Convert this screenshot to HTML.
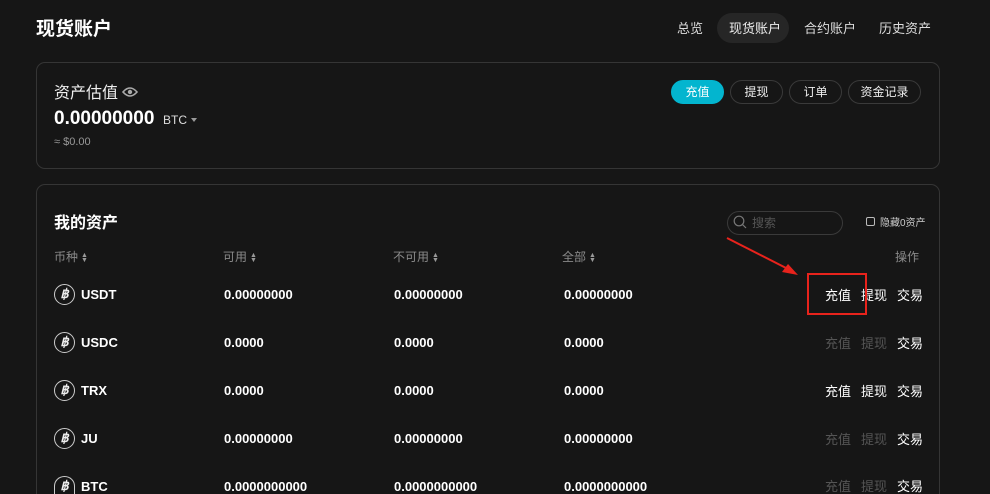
<!DOCTYPE html>
<html style="width:990px;height:494px;overflow:hidden"><head><meta charset="utf-8"><style>
*{margin:0;padding:0;box-sizing:border-box}
body{width:990px;height:494px;background:#161616;color:#fff;font-family:"Liberation Sans","Noto Sans CJK SC",sans-serif;position:relative;overflow:hidden}
#w{position:absolute;left:0;top:0;width:990px;height:494px;overflow:hidden}
.a{position:absolute;white-space:nowrap;line-height:1}
.card{position:absolute;border:1px solid #353535;border-radius:9px}
.btn{position:absolute;top:80px;height:24px;border:1px solid #3a3a3a;border-radius:12px;font-size:12px;line-height:22px;text-align:center;color:#eee}
.h{font-size:12px;color:#8a8a8a;top:251px}
.coin{position:absolute;left:54px;width:21px;height:21px;border:1.3px solid #ccc;border-radius:50%;font-size:13px;font-weight:bold;text-align:center;line-height:18px;font-style:italic;color:#eee}
.c{font-size:13px;font-weight:bold}
.op{font-size:13px}
.dim{color:#555}
.sort{display:inline-block;vertical-align:middle;margin-left:3px;font-size:7px;line-height:5px;color:#999}
</style></head><body><div id="w">
<div class="a" style="left:36px;top:20px;font-size:19px;font-weight:bold">现货账户</div>
<div class="a" style="left:677px;top:22px;font-size:13px;color:#ddd">总览</div>
<div class="a" style="left:717px;top:13px;width:72px;height:30px;border-radius:15px;background:#262626"></div>
<div class="a" style="left:729px;top:22px;font-size:13px;color:#eee">现货账户</div>
<div class="a" style="left:804px;top:22px;font-size:13px;color:#ddd">合约账户</div>
<div class="a" style="left:879px;top:22px;font-size:13px;color:#ddd">历史资产</div>

<div class="card" style="left:36px;top:62px;width:904px;height:107px"></div>
<div class="a" style="left:54px;top:86px;font-size:16px;color:#eee">资产估值</div>
<svg class="a" style="left:122px;top:86px" width="16" height="12" viewBox="0 0 16 12"><path d="M1 6Q8-2 15 6Q8 14 1 6Z" fill="none" stroke="#aaa" stroke-width="1.6"/><circle cx="8" cy="6" r="2.2" fill="#aaa"/></svg>
<div class="a" style="left:54px;top:109px;font-size:19px;font-weight:bold">0.00000000</div>
<div class="a" style="left:163px;top:114px;font-size:12px;color:#ddd">BTC</div>
<div class="a" style="left:191px;top:118px;width:0;height:0;border-left:3.5px solid transparent;border-right:3.5px solid transparent;border-top:4px solid #999"></div>
<div class="a" style="left:54px;top:137px;font-size:11px;color:#999">≈ $0.00</div>
<div class="btn" style="left:671px;width:53px;background:#03b5cf;border-color:#03b5cf;color:#fff">充值</div>
<div class="btn" style="left:730px;width:53px">提现</div>
<div class="btn" style="left:789px;width:53px">订单</div>
<div class="btn" style="left:848px;width:73px">资金记录</div>

<div class="card" style="left:36px;top:184px;width:904px;height:330px"></div>
<div class="a" style="left:54px;top:216px;font-size:16px;font-weight:bold">我的资产</div>
<div class="a" style="left:727px;top:211px;width:116px;height:24px;border:1px solid #3a3a3a;border-radius:12px"></div>
<svg class="a" style="left:733px;top:215px" width="14" height="14" viewBox="0 0 14 14"><circle cx="6" cy="6" r="4.8" fill="none" stroke="#777" stroke-width="1.2"/><path d="M9.5 9.5L13 13" stroke="#777" stroke-width="1.2"/></svg>
<div class="a" style="left:752px;top:217px;font-size:12px;color:#555">搜索</div>
<div class="a" style="left:866px;top:217px;width:9px;height:9px;border:1.2px solid #bbb;border-radius:2px"></div>
<div class="a" style="left:880px;top:219px;font-size:10px;color:#ccc">隐藏0资产</div>

<div class="a h" style="left:54px">币种<span class="sort">▲<br>▼</span></div>
<div class="a h" style="left:223px">可用<span class="sort">▲<br>▼</span></div>
<div class="a h" style="left:393px">不可用<span class="sort">▲<br>▼</span></div>
<div class="a h" style="left:562px">全部<span class="sort">▲<br>▼</span></div>
<div class="a h" style="left:895px">操作</div>

<div class="coin" style="top:284px">฿</div><div class="a c" style="left:81px;top:288px">USDT</div>
<div class="a c" style="left:224px;top:288px">0.00000000</div><div class="a c" style="left:394px;top:288px">0.00000000</div><div class="a c" style="left:564px;top:288px">0.00000000</div>
<div class="a op" style="left:825px;top:289px">充值</div><div class="a op" style="left:861px;top:289px">提现</div><div class="a op" style="left:897px;top:289px">交易</div>

<div class="coin" style="top:332px">฿</div><div class="a c" style="left:81px;top:336px">USDC</div>
<div class="a c" style="left:224px;top:336px">0.0000</div><div class="a c" style="left:394px;top:336px">0.0000</div><div class="a c" style="left:564px;top:336px">0.0000</div>
<div class="a op dim" style="left:825px;top:337px">充值</div><div class="a op dim" style="left:861px;top:337px">提现</div><div class="a op" style="left:897px;top:337px">交易</div>

<div class="coin" style="top:380px">฿</div><div class="a c" style="left:81px;top:384px">TRX</div>
<div class="a c" style="left:224px;top:384px">0.0000</div><div class="a c" style="left:394px;top:384px">0.0000</div><div class="a c" style="left:564px;top:384px">0.0000</div>
<div class="a op" style="left:825px;top:385px">充值</div><div class="a op" style="left:861px;top:385px">提现</div><div class="a op" style="left:897px;top:385px">交易</div>

<div class="coin" style="top:428px">฿</div><div class="a c" style="left:81px;top:432px">JU</div>
<div class="a c" style="left:224px;top:432px">0.00000000</div><div class="a c" style="left:394px;top:432px">0.00000000</div><div class="a c" style="left:564px;top:432px">0.00000000</div>
<div class="a op dim" style="left:825px;top:433px">充值</div><div class="a op dim" style="left:861px;top:433px">提现</div><div class="a op" style="left:897px;top:433px">交易</div>

<div class="coin" style="top:476px;height:18px;border-bottom:none;border-radius:50% 50% 0 0/10px 10px 0 0">฿</div><div class="a c" style="left:81px;top:480px">BTC</div>
<div class="a c" style="left:224px;top:480px">0.0000000000</div><div class="a c" style="left:394px;top:480px">0.0000000000</div><div class="a c" style="left:564px;top:480px">0.0000000000</div>
<div class="a op dim" style="left:825px;top:480px">充值</div><div class="a op dim" style="left:861px;top:480px">提现</div><div class="a op" style="left:897px;top:480px">交易</div>

<svg class="a" style="left:720px;top:230px" width="90" height="55" viewBox="0 0 90 55"><path d="M7 8L70 40" stroke="#e8231c" stroke-width="2"/><path d="M78 45L62 42L68 34Z" fill="#e8231c"/></svg>
<div class="a" style="left:807px;top:273px;width:60px;height:42px;border:2px solid #e8231c"></div>
</div></body></html>
